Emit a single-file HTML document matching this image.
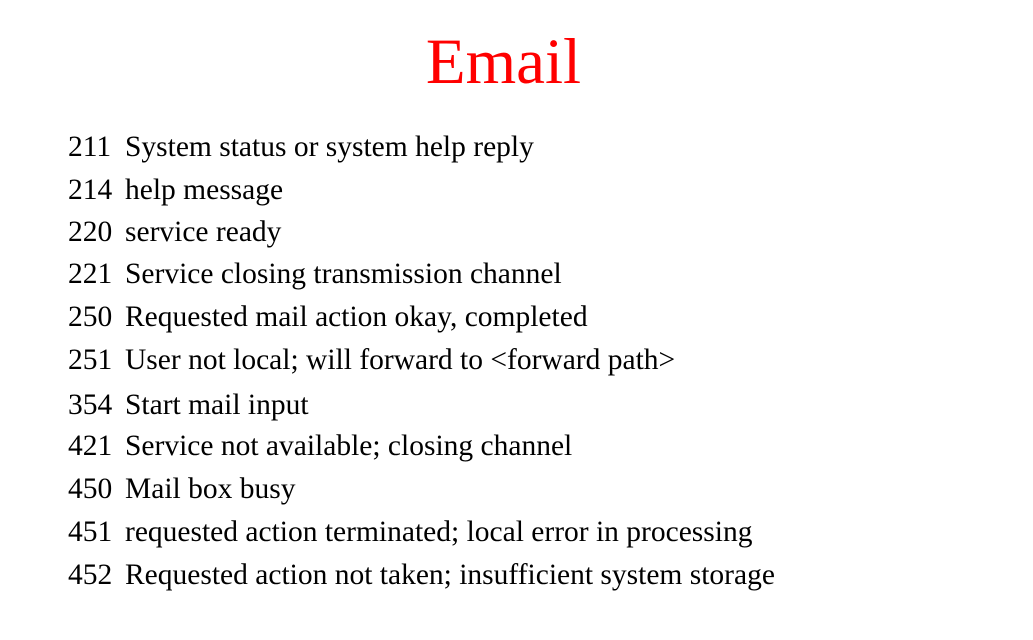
<!DOCTYPE html>
<html><head><meta charset="utf-8"><style>
body{margin:0;width:1033px;height:640px;background:#fff;position:relative;overflow:hidden;font-family:"Liberation Serif",serif;}
.t{position:absolute;left:0;width:1007px;text-align:center;top:29px;font-size:65px;line-height:66px;color:#f00;}
.l{position:absolute;left:68px;font-size:29.5px;line-height:28px;color:#000;white-space:nowrap;}
.l span{display:inline-block;width:57px;}
</style></head><body>
<div class="t">Email</div>
<div class="l" style="top:133px"><span>211</span>System status or system help reply</div>
<div class="l" style="top:176px"><span>214</span>help message</div>
<div class="l" style="top:218px"><span>220</span>service ready</div>
<div class="l" style="top:260px"><span>221</span>Service closing transmission channel</div>
<div class="l" style="top:303px"><span>250</span>Requested mail action okay, completed</div>
<div class="l" style="top:346px"><span>251</span>User not local; will forward to &lt;forward path&gt;</div>
<div class="l" style="top:391px"><span>354</span>Start mail input</div>
<div class="l" style="top:432px"><span>421</span>Service not available; closing channel</div>
<div class="l" style="top:475px"><span>450</span>Mail box busy</div>
<div class="l" style="top:518px"><span>451</span>requested action terminated; local error in processing</div>
<div class="l" style="top:561px"><span>452</span>Requested action not taken; insufficient system storage</div>
</body></html>
